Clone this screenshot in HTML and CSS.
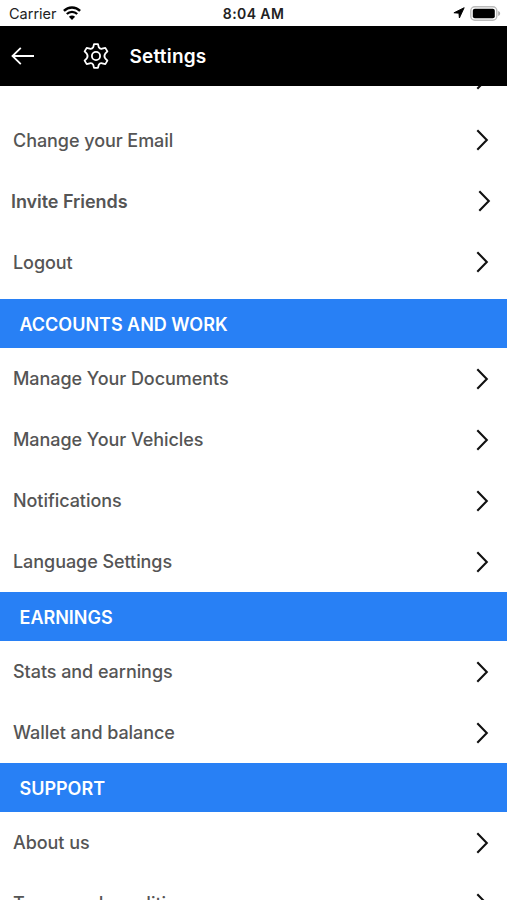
FILE: index.html
```
<!DOCTYPE html>
<html lang="en">
<head>
    <meta charset="UTF-8">
    <meta name="viewport" content="width=device-width, initial-scale=1.0">
    <title>Settings</title>
    <link rel="stylesheet" href="styles.css">
</head>
<body>
    <svg width="0" height="0" class="sprite">
        <symbol id="chevron" viewBox="0 0 14 24">
            <path d="M2.3 2.2 L11.8 12 L2.3 21.8" fill="none" stroke="#111" stroke-width="2.1"/>
        </symbol>
    </svg>

    <div class="status-bar">
        <div class="status-left">
            <span class="carrier">Carrier</span>
            <svg class="wifi" width="18" height="14" viewBox="0 0 18 14">
                <path d="M0.9 4.9 C5.4 0.3 12.6 0.3 17.1 4.9" fill="none" stroke="#000" stroke-width="2.4"/>
                <path d="M3.8 8 C6.7 5.1 11.3 5.1 14.2 8" fill="none" stroke="#000" stroke-width="2.3"/>
                <path d="M9 13.9 L5.9 10.7 C7.6 9 10.4 9 12.1 10.7 Z" fill="#000"/>
            </svg>
        </div>
        <span class="clock">8:04 AM</span>
        <div class="status-right">
            <svg width="12" height="12" viewBox="0 0 12 12">
                <path d="M11.2 0.7 L6.4 11 L5.9 6.2 L0.9 5.8 Z" fill="#000" stroke="#000" stroke-width="0.9" stroke-linejoin="round"/>
            </svg>
            <svg width="31" height="15" viewBox="0 0 31 15">
                <rect x="0.8" y="0.8" width="26" height="13.4" rx="4" fill="#fff" stroke="#bbb" stroke-width="1.4"/>
                <rect x="2.8" y="2.8" width="22" height="9.4" rx="2" fill="#000"/>
                <path d="M28.2 5 C30.8 6 30.8 9 28.2 10 Z" fill="#aaa"/>
            </svg>
        </div>
    </div>

    <header class="header">
        <svg class="back" width="24" height="20" viewBox="0 0 24 20">
            <path d="M23 10 H1.5 M9.8 1.8 L1.5 10 L9.8 18.2" fill="none" stroke="#fff" stroke-width="1.8"/>
        </svg>
        <svg class="gear" width="26" height="26" viewBox="0 0 26 26" fill="none" stroke="#fff" stroke-width="1.8" stroke-linejoin="round">
            <path d="M11 1.2 H15 L15.8 4.3 Q17 6.3 19.2 5.7 L22.3 4.9 L24.4 8.4 L22.2 10.7 Q20.6 13 22.2 15.3 L24.4 17.6 L22.3 21.1 L19.2 20.3 Q17 19.7 15.8 21.7 L15 24.8 H11 L10.2 21.7 Q9 19.7 6.8 20.3 L3.7 21.1 L1.6 17.6 L3.8 15.3 Q5.4 13 3.8 10.7 L1.6 8.4 L3.7 4.9 L6.8 5.7 Q9 6.3 10.2 4.3 Z"/>
            <circle cx="13" cy="13" r="4.1"/>
        </svg>
        <h1>Settings</h1>
    </header>

    <main class="content">
        <ul class="list scrolled">
            <li class="row"><span></span><svg class="chevron"><use href="#chevron"/></svg></li>
            <li class="row"><span>Change your Email</span><svg class="chevron"><use href="#chevron"/></svg></li>
            <li class="row invite"><span>Invite Friends</span><svg class="chevron"><use href="#chevron"/></svg></li>
            <li class="row"><span>Logout</span><svg class="chevron"><use href="#chevron"/></svg></li>
        </ul>

        <h2>ACCOUNTS AND WORK</h2>
        <ul class="list">
            <li class="row"><span>Manage Your Documents</span><svg class="chevron"><use href="#chevron"/></svg></li>
            <li class="row"><span>Manage Your Vehicles</span><svg class="chevron"><use href="#chevron"/></svg></li>
            <li class="row"><span>Notifications</span><svg class="chevron"><use href="#chevron"/></svg></li>
            <li class="row"><span>Language Settings</span><svg class="chevron"><use href="#chevron"/></svg></li>
        </ul>

        <h2>EARNINGS</h2>
        <ul class="list">
            <li class="row"><span>Stats and earnings</span><svg class="chevron"><use href="#chevron"/></svg></li>
            <li class="row"><span>Wallet and balance</span><svg class="chevron"><use href="#chevron"/></svg></li>
        </ul>

        <h2>SUPPORT</h2>
        <ul class="list">
            <li class="row"><span>About us</span><svg class="chevron"><use href="#chevron"/></svg></li>
            <li class="row"><span>Terms and conditions</span><svg class="chevron"><use href="#chevron"/></svg></li>
        </ul>
    </main>
</body>
</html>
```

FILE: styles.css
```
* {
    box-sizing: border-box;
}

body {
    margin: 0;
    height: 100vh;
    display: flex;
    flex-direction: column;
    overflow: hidden;
    background-color: #fff;
    color: #555;
    font-family: Inter, "Liberation Sans", sans-serif;
}

.sprite {
    display: none;
}

/* Status bar */
.status-bar {
    flex: none;
    height: 25.5px;
    padding: 1px 6px 0 9px;
    display: grid;
    grid-template-columns: 1fr auto 1fr;
    align-items: center;
    color: #222;
}

.status-left,
.status-right {
    display: flex;
    align-items: center;
}

.status-left {
    gap: 6px;
}

.status-right {
    justify-content: flex-end;
    gap: 5px;
}

.carrier {
    font-size: 14.5px;
}

.clock {
    margin-right: 3px;
    font-size: 14px;
    font-weight: 600;
    letter-spacing: 0.4px;
}

/* Header */
.header {
    flex: none;
    height: 60.5px;
    padding-left: 11px;
    display: flex;
    align-items: center;
    background-color: #000;
    color: #fff;
}

.gear {
    margin-left: 48px;
}

h1 {
    margin: 0 0 0 20.5px;
    padding-top: 1px;
    font-size: 19px;
    font-weight: 600;
    letter-spacing: 0.2px;
}

/* Settings list */
.content {
    flex: 1;
    min-height: 0;
    overflow: hidden;
}

.list {
    margin: 0;
    padding: 0;
    list-style: none;
}

.scrolled {
    margin-top: -37.5px;
    padding-bottom: 6.5px;
}

.row {
    height: 61px;
    padding: 0 18px 0 13px;
    display: flex;
    align-items: center;
    justify-content: space-between;
    font-size: 18px;
    font-weight: 500;
    letter-spacing: -0.06px;
}

.invite {
    padding: 0 16px 0 11px;
    font-weight: 600;
}

.chevron {
    width: 14px;
    height: 24px;
}

h2 {
    height: 49px;
    margin: 0;
    padding: 1px 0 0 19.5px;
    display: flex;
    align-items: center;
    background-color: #2880f5;
    color: #fff;
    font-size: 18px;
    font-weight: 600;
    letter-spacing: -0.02px;
}
```
